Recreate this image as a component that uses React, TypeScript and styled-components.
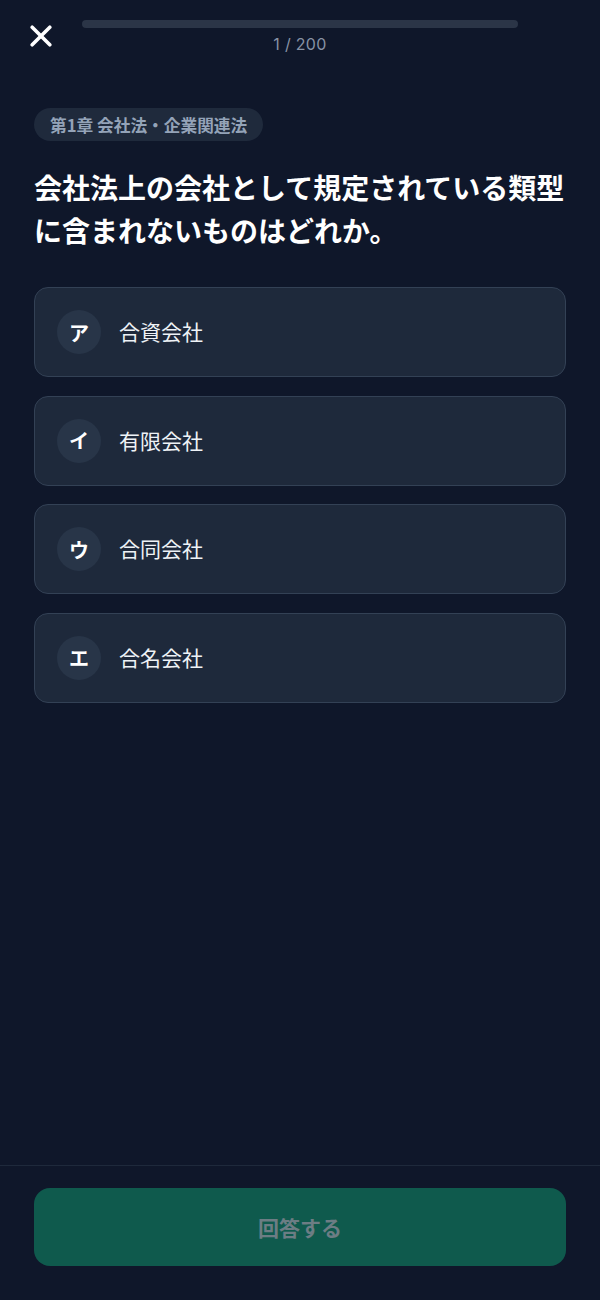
import styled, { createGlobalStyle } from "styled-components"

const GlobalStyle = createGlobalStyle`
  html, body {
    margin: 0;
    padding: 0;
    background: #0f172a;
  }
  body {
    font-family: "Inter", "Noto Sans CJK JP", sans-serif;
    color: #f8fafc;
  }
  * {
    box-sizing: border-box;
  }
`

const Page = styled.div`
  min-height: 100vh;
  display: flex;
  flex-direction: column;
  background: #0f172a;
`

const Header = styled.header`
  display: flex;
  align-items: flex-start;
  gap: 17px;
  padding: 12px 17px 0;
`

const CloseButton = styled.button`
  width: 48px;
  height: 48px;
  flex: none;
  display: flex;
  align-items: center;
  justify-content: center;
  padding: 0;
  border: none;
  background: transparent;
  color: #ffffff;
  cursor: pointer;
`

const Spacer = styled.div`
  width: 48px;
  flex: none;
`

const ProgressBlock = styled.div`
  flex: 1;
  display: flex;
  flex-direction: column;
  align-items: center;
  padding-top: 8px;
`

const Track = styled.div`
  width: 100%;
  height: 8px;
  border-radius: 4px;
  background: #2b3547;
  overflow: hidden;
`

const Fill = styled.div`
  height: 100%;
  background: #10b981;
  border-radius: 4px;
`

const Counter = styled.div`
  margin-top: 6px;
  font-size: 16px;
  line-height: 20px;
  color: #8792a4;
  letter-spacing: 0.3px;
`

const Main = styled.main`
  flex: 1;
  padding: 48px 34px 40px;
`

const Chip = styled.span`
  display: inline-flex;
  align-items: center;
  height: 33px;
  padding: 0 16px;
  border-radius: 999px;
  background: #1f2a3c;
  color: #94a3b8;
  font-family: "Noto Sans CJK JP", sans-serif;
  font-size: 16.7px;
  font-weight: 700;
`

const Question = styled.h1`
  margin: 25px 0 0;
  font-family: "Noto Sans CJK JP", sans-serif;
  font-size: 28px;
  line-height: 43px;
  font-weight: 700;
  color: #ffffff;
`

const Options = styled.div`
  margin-top: 35px;
  display: flex;
  flex-direction: column;
  gap: 18.5px;
`

const Option = styled.button`
  display: flex;
  align-items: center;
  gap: 18px;
  width: 100%;
  height: 90px;
  padding: 0 22px;
  border: 1px solid #334155;
  border-radius: 14px;
  background: #1e293b;
  color: #eef2f6;
  text-align: left;
  cursor: pointer;
  font-family: "Noto Sans CJK JP", sans-serif;
`

const Letter = styled.span`
  width: 44px;
  height: 44px;
  flex: none;
  display: flex;
  align-items: center;
  justify-content: center;
  border-radius: 50%;
  background: #283548;
  color: #ffffff;
  font-size: 20px;
  font-weight: 700;
`

const OptionText = styled.span`
  font-size: 21px;
  font-weight: 400;
  line-height: 1.4;
`

const Footer = styled.footer`
  border-top: 1px solid #1e293b;
  padding: 22px 34px 34px;
`

const SubmitButton = styled.button<{ $enabled: boolean }>`
  width: 100%;
  height: 78px;
  border: none;
  border-radius: 16px;
  background: ${(p) => (p.$enabled ? "#10b981" : "#0f5a4d")};
  color: ${(p) => (p.$enabled ? "#ffffff" : "#6c7d84")};
  font-family: "Noto Sans CJK JP", sans-serif;
  font-size: 21px;
  font-weight: 700;
  cursor: ${(p) => (p.$enabled ? "pointer" : "default")};
`

const choices = [
  { label: "ア", text: "合資会社" },
  { label: "イ", text: "有限会社" },
  { label: "ウ", text: "合同会社" },
  { label: "エ", text: "合名会社" },
]

function App() {
  const current = 1
  const total = 200

  return (
    <>
      <GlobalStyle />
      <Page>
        <Header>
          <CloseButton aria-label="閉じる">
            <svg width="22" height="22" viewBox="0 0 22 22" fill="none">
              <path
                d="M2.2 2.2 19.8 19.8M19.8 2.2 2.2 19.8"
                stroke="currentColor"
                strokeWidth="3.6"
                strokeLinecap="round"
              />
            </svg>
          </CloseButton>
          <ProgressBlock>
            <Track>
              <Fill style={{ width: `${((current - 1) / total) * 100}%` }} />
            </Track>
            <Counter>
              {current} / {total}
            </Counter>
          </ProgressBlock>
          <Spacer />
        </Header>

        <Main>
          <Chip>第1章 会社法・企業関連法</Chip>
          <Question>
            会社法上の会社として規定されている類型に含まれないものはどれか。
          </Question>
          <Options>
            {choices.map((c) => (
              <Option key={c.label}>
                <Letter>{c.label}</Letter>
                <OptionText>{c.text}</OptionText>
              </Option>
            ))}
          </Options>
        </Main>

        <Footer>
          <SubmitButton $enabled={false} disabled>
            回答する
          </SubmitButton>
        </Footer>
      </Page>
    </>
  )
}

export default App
